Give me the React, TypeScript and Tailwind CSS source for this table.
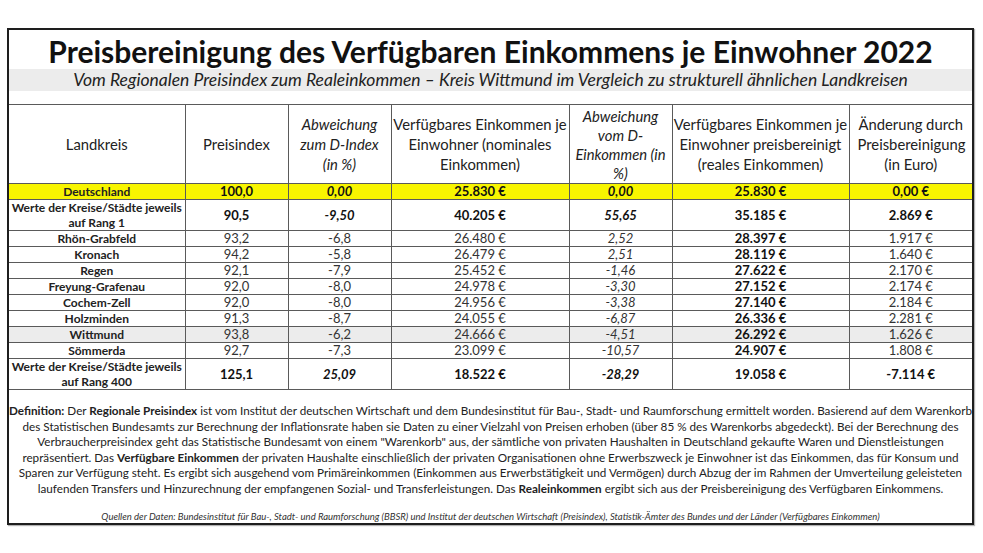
const font = { fontFamily: 'Lato, "Open Sans", sans-serif' };

type Row = {
  name: string;
  idx: string;
  dev: string;
  nom: string;
  devInc: string;
  real: string;
  diff: string;
  kind?: 'de' | 'rank' | 'hl';
};

const rows: Row[] = [
  { name: 'Deutschland', idx: '100,0', dev: '0,00', nom: '25.830 €', devInc: '0,00', real: '25.830 €', diff: '0,00 €', kind: 'de' },
  { name: 'Werte der Kreise/Städte jeweils|auf Rang 1', idx: '90,5', dev: '-9,50', nom: '40.205 €', devInc: '55,65', real: '35.185 €', diff: '2.869 €', kind: 'rank' },
  { name: 'Rhön-Grabfeld', idx: '93,2', dev: '-6,8', nom: '26.480 €', devInc: '2,52', real: '28.397 €', diff: '1.917 €' },
  { name: 'Kronach', idx: '94,2', dev: '-5,8', nom: '26.479 €', devInc: '2,51', real: '28.119 €', diff: '1.640 €' },
  { name: 'Regen', idx: '92,1', dev: '-7,9', nom: '25.452 €', devInc: '-1,46', real: '27.622 €', diff: '2.170 €' },
  { name: 'Freyung-Grafenau', idx: '92,0', dev: '-8,0', nom: '24.978 €', devInc: '-3,30', real: '27.152 €', diff: '2.174 €' },
  { name: 'Cochem-Zell', idx: '92,0', dev: '-8,0', nom: '24.956 €', devInc: '-3,38', real: '27.140 €', diff: '2.184 €' },
  { name: 'Holzminden', idx: '91,3', dev: '-8,7', nom: '24.055 €', devInc: '-6,87', real: '26.336 €', diff: '2.281 €' },
  { name: 'Wittmund', idx: '93,8', dev: '-6,2', nom: '24.666 €', devInc: '-4,51', real: '26.292 €', diff: '1.626 €', kind: 'hl' },
  { name: 'Sömmerda', idx: '92,7', dev: '-7,3', nom: '23.099 €', devInc: '-10,57', real: '24.907 €', diff: '1.808 €' },
  { name: 'Werte der Kreise/Städte jeweils|auf Rang 400', idx: '125,1', dev: '25,09', nom: '18.522 €', devInc: '-28,29', real: '19.058 €', diff: '-7.114 €', kind: 'rank' },
];

const cell = 'border border-[#5a5a5a] text-center align-middle p-0 leading-[15px]';

export default function App() {
  return (
    <div className="w-[983px] h-[553px] bg-white pt-[28px] pl-[7px]" style={font}>
      <div className="w-[967px] h-[497px] border-2 border-[#1e1e1e] flex flex-col shadow-[1px_1px_1px_rgba(0,0,0,0.3)]">
        <div className="h-[81px] flex flex-col">
          <h1 className="h-[39px] pt-[3px] text-center text-[30px] leading-[36px] font-bold text-[#111]">
            Preisbereinigung des Verfügbaren Einkommens je Einwohner 2022
          </h1>
          <div className="h-[22px] bg-[#ececec] text-center text-[17.5px] leading-[22px] italic text-[#222] whitespace-nowrap">
            Vom Regionalen Preisindex zum Realeinkommen – Kreis Wittmund im Vergleich zu strukturell ähnlichen Landkreisen
          </div>
        </div>

        <table className="w-[963px] table-fixed border-collapse text-[#222]">
          <colgroup>
            <col className="w-[176px]" />
            <col className="w-[103px]" />
            <col className="w-[103px]" />
            <col className="w-[178px]" />
            <col className="w-[103px]" />
            <col className="w-[177px]" />
            <col className="w-[123px]" />
          </colgroup>
          <thead>
            <tr className="h-[76px] text-[14.8px]">
              <th className={`${cell} border-l-0 font-normal leading-[20px]`}>Landkreis</th>
              <th className={`${cell} font-normal leading-[20px]`}>Preisindex</th>
              <th className={`${cell} font-normal italic leading-[20px] px-2`}>Abweichung zum D-Index (in %)</th>
              <th className={`${cell} font-normal leading-[20px]`}>Verfügbares Einkommen je Einwohner (nominales Einkommen)</th>
              <th className={`${cell} font-normal italic leading-[19px] px-1 pt-[2px]`}>Abweichung vom D-Einkommen (in %)</th>
              <th className={`${cell} font-normal leading-[20px]`}>Verfügbares Einkommen je Einwohner preisbereinigt (reales Einkommen)</th>
              <th className={`${cell} border-r-0 font-normal leading-[20px] px-2`}>Änderung durch Preisbereinigung (in Euro)</th>
            </tr>
          </thead>
          <tbody className="text-[13px]">
            {rows.map((r) => {
              const special = r.kind === 'de' || r.kind === 'rank';
              const bg = r.kind === 'de' ? 'bg-[#f8f500]' : r.kind === 'hl' ? 'bg-[#ececec]' : 'bg-white';
              const h = r.kind === 'rank' ? 'h-[31px]' : 'h-[15.4px]';
              const b = special ? 'font-bold text-[#111]' : 'font-normal text-[#333]';
              const [l1, l2] = r.name.split('|');
              return (
                <tr key={r.name} className={`${bg} ${h}`}>
                  <td className={`${cell} border-l-0 font-bold text-[#222] text-[12px] whitespace-nowrap`}>
                    {l1}
                    {l2 && <br />}
                    {l2}
                  </td>
                  <td className={`${cell} ${b}`}>{r.idx}</td>
                  <td className={`${cell} ${b} ${special ? 'italic' : ''}`}>{r.dev}</td>
                  <td className={`${cell} ${b}`}>{r.nom}</td>
                  <td className={`${cell} ${b} italic`}>{r.devInc}</td>
                  <td className={`${cell} font-bold text-[#111]`}>{r.real}</td>
                  <td className={`${cell} border-r-0 ${b}`}>{r.diff}</td>
                </tr>
              );
            })}
          </tbody>
        </table>

        <div className="flex-1 flex flex-col items-center pt-[13px] text-[#222]">
          <p className="text-[11.7px] leading-[15.5px] text-center whitespace-nowrap">
            <b>Definition:</b> Der <b>Regionale Preisindex</b> ist vom Institut der deutschen Wirtschaft und dem Bundesinstitut für Bau-, Stadt- und Raumforschung ermittelt worden. Basierend auf dem Warenkorb
            <br />
            des Statistischen Bundesamts zur Berechnung der Inflationsrate haben sie Daten zu einer Vielzahl von Preisen erhoben (über 85 % des Warenkorbs abgedeckt). Bei der Berechnung des
            <br />
            Verbraucherpreisindex geht das Statistische Bundesamt von einem "Warenkorb" aus, der sämtliche von privaten Haushalten in Deutschland gekaufte Waren und Dienstleistungen
            <br />
            repräsentiert. Das <b>Verfügbare Einkommen</b> der privaten Haushalte einschließlich der privaten Organisationen ohne Erwerbszweck je Einwohner ist das Einkommen, das  für Konsum und
            <br />
            Sparen zur Verfügung steht. Es ergibt sich ausgehend vom Primäreinkommen (Einkommen aus Erwerbstätigkeit und Vermögen) durch Abzug der im Rahmen der Umverteilung geleisteten
            <br />
            laufenden Transfers und Hinzurechnung der empfangenen Sozial- und Transferleistungen. Das <b>Realeinkommen</b> ergibt sich aus der Preisbereinigung des Verfügbaren Einkommens.
          </p>
          <p className="mt-[15px] text-[9.5px] leading-[12px] italic text-[#333] whitespace-nowrap">
            Quellen der Daten: Bundesinstitut für Bau-, Stadt- und Raumforschung (BBSR) und Institut der deutschen Wirtschaft (Preisindex), Statistik-Ämter des Bundes und der Länder (Verfügbares Einkommen)
          </p>
        </div>
      </div>
    </div>
  );
}
